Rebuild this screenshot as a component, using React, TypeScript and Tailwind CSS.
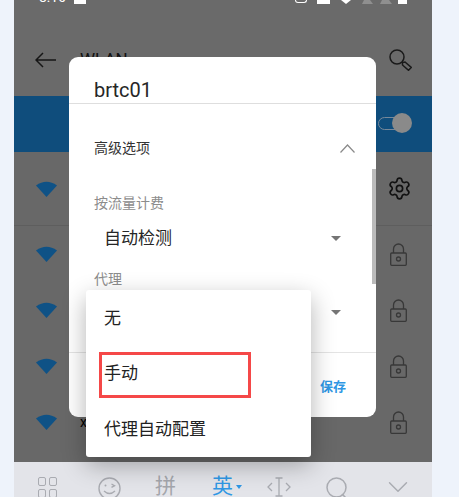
import React from "react";
import { ChevronDown, Settings } from "lucide-react";

const font = "font-['Roboto','Noto_Sans_CJK_SC',sans-serif]";

const WifiIcon = () => (
  <svg width="21" height="16" viewBox="0 0 21 16" className="shrink-0">
    <path d="M0 4.5 Q10.5 -3 21 4.5 L10.5 16 Z" fill="#0f5286" />
  </svg>
);

const LockIcon = () => (
  <svg width="17" height="23" viewBox="0 0 17 23" fill="none" stroke="#383838" strokeWidth="1.3">
    <rect x="0.7" y="10" width="15.6" height="12.3" rx="1" />
    <path d="M3.5 10V6a5 5 0 0 1 10 0V10" />
    <circle cx="8.5" cy="16" r="2" />
  </svg>
);

const SearchIcon = () => (
  <svg width="23" height="22" viewBox="0 0 23 22" fill="none" stroke="#1a1a1a" strokeWidth="1.5">
    <circle cx="8" cy="8" r="7" />
    <path d="M13.5 13.5 L16 13 L22.3 18.5 L19.5 21.3 L13.5 16 Z" />
  </svg>
);

const Caret = ({ className }: { className: string }) => (
  <div className={`w-0 h-0 border-x-[5px] border-x-transparent border-t-[5px] ${className}`} />
);

const ListRow = ({ children, text }: { children: React.ReactNode; text?: string }) => (
  <div className="h-[56px] flex items-center pl-[22px] pr-[25px] justify-between">
    <div className="flex items-center">
      <WifiIcon />
      {text && <span className="ml-[23px] text-[14px] text-black">{text}</span>}
    </div>
    {children}
  </div>
);

const App = () => {
  return (
    <div className={`relative w-[459px] h-[497px] overflow-hidden bg-[#eef3fb] ${font}`}>
      <div className="ml-[14px] w-[418px] h-[497px] flex flex-col">
        {/* status bar + title */}
        <div className="h-[96px] bg-[#6a6a6a] shrink-0 relative">
          <div className="flex items-start justify-between pl-[25px] pr-[25px] h-[4px] overflow-hidden">
            <div className="flex items-end gap-[8px] h-[4px]">
              <span className="text-[14px] leading-[14px] text-white -mt-[10px]">8:10</span>
              <div className="w-[12px] h-[4px] bg-white" />
            </div>
            <div className="flex items-start h-[4px]">
              <div className="w-[12px] h-[3px] border-b border-x border-white rounded-b-full" />
              <div className="ml-[10px] w-[13px] h-[4px] bg-white" />
              <svg width="14" height="4" viewBox="0 0 14 4" className="ml-[8px]">
                <path d="M3 0H13L8 4Z" fill="#fff" />
              </svg>
              <svg width="11" height="4" viewBox="0 0 11 4" className="ml-[10px]">
                <path d="M2 0H8L11 4H0Z" fill="#8f8f8f" />
              </svg>
              <svg width="12" height="4" viewBox="0 0 12 4" className="ml-[7px]">
                <path d="M2 0H9L12 4H0Z" fill="#8f8f8f" />
              </svg>
              <div className="ml-[6px] w-[9px] h-[4px] bg-white" />
            </div>
          </div>
          <div className="flex items-center justify-between pl-[21px] pr-[20px] mt-[43px]">
            <div className="flex items-center">
              <svg width="21" height="16" viewBox="0 0 21 16" fill="none" stroke="#161616" strokeWidth="1.5">
                <path d="M21 8H1M8 1L1 8l7 7" />
              </svg>
              <span className="ml-[24px] text-[17px] text-[#111]">WLAN</span>
            </div>
            <SearchIcon />
          </div>
        </div>

        {/* wifi switch band */}
        <div className="h-[56px] bg-[#0f4d7c] shrink-0 flex justify-end items-start pr-[20px] pt-[17px]">
          <div className="relative w-[34px] h-[20px]">
            <div className="absolute left-0 top-[4px] w-[26px] h-[13px] rounded-full border border-[#77899a]" />
            <div className="absolute right-0 top-0 w-[20px] h-[20px] rounded-full bg-[#8a8a8a]" />
          </div>
        </div>

        {/* network list */}
        <div className="flex-1 bg-[#686868]">
          <div className="h-[74px] flex items-center justify-between pl-[22px] pr-[20px] border-b border-[#5e5e5e]">
            <WifiIcon />
            <Settings size={25} strokeWidth={1.6} color="#111111" />
          </div>
          <ListRow><LockIcon /></ListRow>
          <ListRow><LockIcon /></ListRow>
          <ListRow><LockIcon /></ListRow>
          <ListRow text="x"><LockIcon /></ListRow>
        </div>

        {/* keyboard toolbar */}
        <div className="h-[35px] bg-[#e3e4e9] shrink-0 flex items-start pt-[15px] pl-[24px] overflow-visible">
          <div className="grid grid-cols-2 gap-[3px] w-[19px] shrink-0">
            <div className="h-[9px] border-[1.5px] border-[#a9abb1] rounded-[2px]" />
            <div className="h-[9px] border-[1.5px] border-[#a9abb1] rounded-[2px]" />
            <div className="h-[9px] border-[1.5px] border-[#a9abb1] rounded-[2px]" />
            <div className="h-[9px] border-[1.5px] border-[#a9abb1] rounded-[2px]" />
          </div>
          <svg width="23" height="23" viewBox="0 0 23 23" fill="none" stroke="#a9abb1" strokeWidth="1.4" className="ml-[41px] shrink-0">
            <circle cx="11.5" cy="11.5" r="10.5" />
            <circle cx="7.5" cy="8.5" r="1" fill="#a9abb1" stroke="none" />
            <path d="M13.5 7l3 1.7-3 1.7M6 14q5.5 5 11 0" />
          </svg>
          <span className="ml-[34px] text-[21px] leading-[21px] text-[#a4a6ac] -mt-[1px]">拼</span>
          <span className="ml-[36px] text-[21px] leading-[21px] text-[#2f97e4] -mt-[1px]">英</span>
          <div className="ml-[3px] mt-[8px] w-0 h-0 border-x-[3.5px] border-x-transparent border-t-[4px] border-t-[#2f97e4]" />
          <svg width="24" height="20" viewBox="0 0 24 20" fill="none" stroke="#a9abb1" strokeWidth="1.3" className="ml-[25px] shrink-0">
            <path d="M5 6L1 10l4 4M19 6l4 4-4 4M8.5 1h7M12 1v18M8.5 19h7" />
          </svg>
          <svg width="22" height="22" viewBox="0 0 22 22" fill="none" stroke="#a9abb1" strokeWidth="1.5" className="ml-[35px] shrink-0">
            <circle cx="10.5" cy="10.5" r="9.5" />
            <path d="M16 17l5 5" />
          </svg>
          <ChevronDown size={34} strokeWidth={1} color="#a9abb1" className="ml-[33px] -mt-[7px] shrink-0" />
        </div>
      </div>

      {/* settings dialog */}
      <div className="absolute left-[69px] top-[57px] w-[307px] h-[360px] bg-white rounded-[9px] flex flex-col overflow-hidden">
        <div className="h-[47px] border-b border-[#dedede] px-[25px] pt-[21px] shrink-0">
          <div className="text-[20px] leading-[24px] text-[#262626]">brtc01</div>
        </div>
        <div className="relative h-[249px] border-b border-[#e4e4e4] shrink-0 px-[25px]">
          <div className="flex items-center justify-between h-[20px] mt-[34px]">
            <span className="text-[14px] leading-[20px] text-[#333]">高级选项</span>
            <svg width="15" height="9" viewBox="0 0 15 9" fill="none" stroke="#8a8a8a" strokeWidth="1.2" className="mr-[-4px]">
              <path d="M0.5 8.5L7.5 1l7 7.5" />
            </svg>
          </div>
          <div className="text-[14px] leading-[20px] text-[#8c8c8c] mt-[35px]">按流量计费</div>
          <div className="flex items-center justify-between mt-[13px] pl-[10px] pr-[10px]">
            <span className="text-[17px] leading-[24px] text-[#262626]">自动检测</span>
            <Caret className="border-t-[#757575]" />
          </div>
          <div className="text-[14px] leading-[20px] text-[#8c8c8c] mt-[19px]">代理</div>
          <div className="flex justify-end pr-[10px] mt-[21px]">
            <Caret className="border-t-[#757575]" />
          </div>
          <div className="absolute right-0 top-[65px] w-[4px] h-[115px] bg-[#bbbbbb]" />
        </div>
        <div className="flex-1 flex justify-end items-start pt-[25px] pr-[30px]">
          <span className="text-[13px] leading-[18px] font-bold text-[#2f97e4]">保存</span>
        </div>
      </div>

      {/* proxy dropdown */}
      <div className="absolute left-[86px] top-[290px] w-[225px] h-[167px] bg-white rounded-[3px] shadow-[0_8px_24px_rgba(0,0,0,0.3)] flex flex-col pt-[2px] pl-[18px] text-[17px] text-[#222]">
        <div className="h-[56px] flex items-center">无</div>
        <div className="h-[57px] flex items-center">手动</div>
        <div className="h-[57px] flex items-center">代理自动配置</div>
        <div className="absolute left-[13px] top-[62px] w-[152px] h-[46px] border-[3px] border-[#f54848]" />
      </div>
    </div>
  );
};

export default App;
